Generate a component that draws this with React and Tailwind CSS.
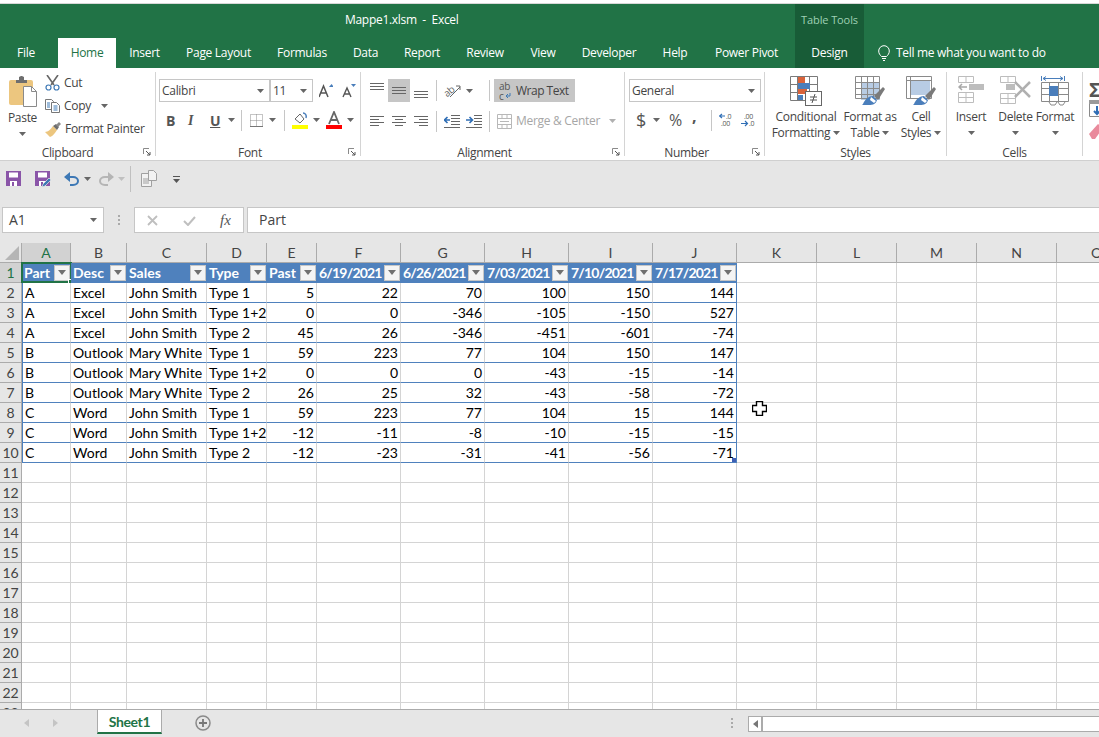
import { Fragment } from "react";

const TABS = [
  ["File", "w-[52px] mr-[6px]"],
  ["Home", "w-[58px]"],
  ["Insert", "w-[57px]"],
  ["Page Layout", "w-[91px]"],
  ["Formulas", "w-[76px]"],
  ["Data", "w-[51px]"],
  ["Report", "w-[62px]"],
  ["Review", "w-[64px]"],
  ["View", "w-[52px]"],
  ["Developer", "w-[80px]"],
  ["Help", "w-[52px]"],
  ["Power Pivot", "w-[91px]"],
];

const COLUMNS = ["A", "B", "C", "D", "E", "F", "G", "H", "I", "J", "K", "L", "M", "N", "O"];
const HEADERS = ["Part", "Desc", "Sales", "Type", "Past", "6/19/2021", "6/26/2021", "7/03/2021", "7/10/2021", "7/17/2021"];

const ROWS = [
  ["A", "Excel", "John Smith", "Type 1", 5, 22, 70, 100, 150, 144],
  ["A", "Excel", "John Smith", "Type 1+2", 0, 0, -346, -105, -150, 527],
  ["A", "Excel", "John Smith", "Type 2", 45, 26, -346, -451, -601, -74],
  ["B", "Outlook", "Mary White", "Type 1", 59, 223, 77, 104, 150, 147],
  ["B", "Outlook", "Mary White", "Type 1+2", 0, 0, 0, -43, -15, -14],
  ["B", "Outlook", "Mary White", "Type 2", 26, 25, 32, -43, -58, -72],
  ["C", "Word", "John Smith", "Type 1", 59, 223, 77, 104, 15, 144],
  ["C", "Word", "John Smith", "Type 1+2", -12, -11, -8, -10, -15, -15],
  ["C", "Word", "John Smith", "Type 2", -12, -23, -31, -41, -56, -71],
];

function Svg({ w, h, className = "", children }) {
  return (
    <svg width={w} height={h} viewBox={`0 0 ${w} ${h}`} fill="none" className={`block shrink-0 ${className}`}>
      {children}
    </svg>
  );
}

function Caret({ className = "", color = "#666" }) {
  return (
    <Svg w={7} h={4} className={className}>
      <path d="M0 0h7L3.5 4z" fill={color} />
    </Svg>
  );
}

function Sep({ className = "" }) {
  return <div className={`h-[21px] w-px shrink-0 bg-[#c6c6c6] ${className}`} />;
}

function Launcher() {
  return (
    <Svg w={8} h={8} className="absolute right-[4px] top-[4px]">
      <path d="M.5 6V.5H6" stroke="#8a8a8a" />
      <path d="M3 3l4 4M7 4v3H4" stroke="#555" />
    </Svg>
  );
}

function Group({ w, label, launcher, pad = "", children }) {
  return (
    <div className={`flex shrink-0 ${w}`}>
      <div className="flex min-w-0 flex-1 flex-col">
        <div className="h-[76px]">{children}</div>
        <div className="relative h-[16px] text-center leading-[16px]">
          <div className={`pt-[1px] ${pad}`}>{label}</div>
          {launcher && <Launcher />}
        </div>
      </div>
      <div className="my-[4px] w-px bg-[#d4d4d4]" />
    </div>
  );
}

function Combo({ w, children }) {
  return (
    <div className={`flex h-[23px] items-center justify-between border border-[#c6c6c6] bg-white pl-[2px] pr-[5px] ${w}`}>
      <span className="leading-none">{children}</span>
      <Caret />
    </div>
  );
}

function AlignLines({ lines, className = "" }) {
  return (
    <Svg w={14} h={14} className={className}>
      {lines.map(([a, b, y]) => (
        <path key={y} d={`M${a} ${y + 0.5}H${b}`} stroke="#666" />
      ))}
    </Svg>
  );
}

function BigButton({ w, icon, line1, line2 }) {
  return (
    <div className={`flex shrink-0 flex-col items-center ${w}`}>
      <div className="flex h-[36px] items-start pt-[8px]">{icon}</div>
      <div className="mt-[5px] whitespace-nowrap leading-[16px]">{line1}</div>
      {line2 ? (
        <div className="flex items-center gap-[3px] whitespace-nowrap leading-[16px]">
          {line2}
          <Caret />
        </div>
      ) : (
        <div className="flex h-[16px] items-center">
          <Caret />
        </div>
      )}
    </div>
  );
}

function Brush({ x = 0, y = 0 }) {
  return (
    <g transform={`translate(${x} ${y})`}>
      <path d="M14 10L23 1l2 2-7 11z" fill="#7a7a7a" />
      <path d="M3 18c2-5 6-8 10-8l4 4c-1 4-4 5-8 5H2z" fill="#4a7ebb" />
      <path d="M11 11l5 4-2 2-4-3z" fill="#fff" />
    </g>
  );
}

function CondIcon() {
  return (
    <Svg w={32} h={30}>
      <path d="M.5.5h27v24H.5zM.5 8.5h27M.5 16.5h27M7.5.5v24M19.5.5v24" stroke="#7a7a7a" />
      <rect x="8" y="1" width="7" height="6" fill="#d9633b" />
      <rect x="8" y="7" width="12" height="6" fill="#4a7ebb" />
      <rect x="8" y="13" width="9" height="5" fill="#d9633b" />
      <rect x="8" y="19" width="5" height="5" fill="#4a7ebb" />
      <rect x="15.5" y="15.5" width="16" height="14" fill="#fff" stroke="#666" />
      <path d="M20 21h7M20 24h7M25 18l-3 9" stroke="#555" />
    </Svg>
  );
}

function TableIcon() {
  return (
    <Svg w={30} h={30}>
      <rect x="6" y="6" width="19" height="18" fill="#b8cce4" />
      <path d="M.5.5h24v22H.5zM.5 6.5h24M.5 12.5h24M.5 18.5h24M6.5.5v22M12.5.5v22M18.5.5v22" stroke="#8a8a8a" />
      <Brush x={5} y={10} />
    </Svg>
  );
}

function CellStyleIcon() {
  return (
    <Svg w={30} h={30}>
      <rect x="5" y="5" width="19" height="14" fill="#b8cce4" />
      <path d="M.5.5h25v22H.5zM.5 4.5h25M4.5.5v22" stroke="#8a8a8a" />
      <Brush x={5} y={10} />
    </Svg>
  );
}

function InsertIcon() {
  return (
    <Svg w={26} h={27}>
      <path d="M.5.5h15v6H.5zM8 .5v6M.5 16.5h15v10H.5zM.5 21.5h15M8 16.5v10" stroke="#bdbdbd" />
      <rect x="11" y="8" width="15" height="6" fill="#bdbdbd" />
      <path d="M1 11h8M4 8l-3 3 3 3" stroke="#a8a8a8" strokeWidth="1.5" />
    </Svg>
  );
}

function DeleteIcon() {
  return (
    <Svg w={31} h={28}>
      <path d="M.5.5h15v6H.5zM8 .5v6M.5 17.5h15v10H.5zM.5 22.5h15M8 17.5v10" stroke="#bdbdbd" />
      <rect x="6" y="8" width="9" height="6" fill="#bdbdbd" />
      <path d="M15 6l15 15M30 6L15 21" stroke="#b0b0b0" strokeWidth="2.5" />
    </Svg>
  );
}

function FormatIcon() {
  return (
    <Svg w={29} h={30}>
      <path d="M.5 0v5M23.5 0v5M2 2.5h20" stroke="#4a7ebb" />
      <path d="M5 .5L2 2.500l3 2M19 .5l3 2-3 2" stroke="#4a7ebb" />
      <path d="M.5 6.500h27v19H.5zM.5 12.500h27M.5 18.500h27M8.500 6.500v19M17.500 6.500v19" stroke="#8a8a8a" />
      <rect x="8" y="10" width="9" height="10" fill="#4a7ebb" />
      <path d="M8 26l2 3h4l2-3M17 26l2 3h3l2-3" stroke="#8a8a8a" />
    </Svg>
  );
}

function SaveIcon() {
  return (
    <Svg w={15} h={15}>
      <path d="M0 0h15v15H0z" fill="#8a55a8" />
      <rect x="3" y="1.5" width="9" height="5" fill="#fff" />
      <rect x="4" y="10" width="7" height="5" fill="#fff" />
      <rect x="6" y="11" width="2" height="4" fill="#8a55a8" />
    </Svg>
  );
}

function ClipboardGroup() {
  return (
    <Group w="w-[156px]" label="Clipboard" launcher pad="pr-[20px]">
      <div className="flex">
        <div className="flex w-[45px] flex-col items-center">
          <Svg w={30} h={33} className="mt-[7px]">
            <rect x="1" y="5" width="24" height="25" rx="2" fill="#ecc67f" />
            <path d="M8 5h3V2l2-1h1l2 1v3h3v3H8z" fill="#6e6e6e" />
            <path d="M15.5 11.5h8l5 5v15h-13z" fill="#fff" stroke="#8a8a8a" />
            <path d="M23.5 11.5v5h5" stroke="#8a8a8a" />
          </Svg>
          <div className="mt-[2px] leading-[16px]">Paste</div>
          <Caret className="mt-[6px]" />
        </div>
        <div className="flex flex-col">
          <div className="mt-[5px] flex h-[20px] items-center gap-[4px]">
            <Svg w={15} h={16}>
              <path d="M2 0l7 10M13 0L6 10" stroke="#666" strokeWidth="1.6" />
              <circle cx="3.5" cy="12.5" r="2.5" stroke="#3d78b5" strokeWidth="1.2" />
              <circle cx="11.5" cy="12.5" r="2.5" stroke="#3d78b5" strokeWidth="1.2" />
            </Svg>
            <span>Cut</span>
          </div>
          <div className="mt-[3px] flex h-[20px] items-center gap-[4px]">
            <Svg w={15} h={14}>
              <path d="M.5.5h6l2 2v8h-8z" fill="#fff" stroke="#777" />
              <path d="M6.500 3.500h5l3 3v7h-8z" fill="#fff" stroke="#777" />
              <path d="M2 4h3M2 6h3M2 8h3M8.500 7h4M8.500 9h4M8.500 11h4" stroke="#3d78b5" />
            </Svg>
            <span>Copy</span>
            <Caret className="ml-[6px]" />
          </div>
          <div className="mt-[3px] flex h-[20px] items-center gap-[4px]">
            <Svg w={16} h={15}>
              <path d="M0 10c3 0 6-3 8-6l4 4c-2 3-4 6-7 7z" fill="#ecc67f" />
              <path d="M8 4l3-2 3 3-2 3z" fill="#6e6e6e" />
              <path d="M11 3l3-3 2 2-3 3z" fill="#8a8a8a" />
            </Svg>
            <span>Format Painter</span>
          </div>
        </div>
      </div>
    </Group>
  );
}

function FontGroup() {
  return (
    <Group w="w-[205px]" label="Font" launcher pad="pr-[16px]">
      <div className="flex items-center pl-[3px] pt-[11px]">
        <Combo w="w-[111px]">Calibri</Combo>
        <Combo w="w-[43px]">11</Combo>
        <Svg w={14} h={14} className="ml-[6px]">
          <path d="M0 13L4.500 2 9 13M2 9h5" stroke="#555" strokeWidth="1.5" />
          <path d="M10 3l2.500-3L15 3z" fill="#4a7ebb" />
        </Svg>
        <Svg w={14} h={14} className="ml-[9px]">
          <path d="M1 13L5 4l4 9M2.500 10h5" stroke="#555" strokeWidth="1.4" />
          <path d="M9 0h5l-2.500 3z" fill="#4a7ebb" />
        </Svg>
      </div>
      <div className="mt-[8px] flex h-[20px] items-center pl-[10px] font-bold text-[#555]">
        <span className="w-[22px] text-[14px]">B</span>
        <span className="w-[22px] font-['Liberation_Serif',serif] text-[14px] italic">I</span>
        <span className="w-[14px] text-[14px] underline">U</span>
        <Caret className="ml-[4px]" />
        <Sep className="ml-[6px]" />
        <Svg w={13} h={13} className="ml-[8px]">
          <path d="M.5.500h12v12H.5zM6.500.500v12M.5 6.500h12" stroke="#8a8a8a" strokeDasharray="1 1" />
          <path d="M0 12.500h13" stroke="#777" />
        </Svg>
        <Caret className="ml-[6px]" />
        <Sep className="ml-[8px]" />
        <Svg w={16} h={18} className="ml-[7px]">
          <path d="M3 8l5-5 4 5-4 4z" fill="#fff" stroke="#666" />
          <path d="M11 2c2 0 4 2 3 5" stroke="#4a7ebb" strokeWidth="1.5" />
          <rect y="14" width="16" height="4" fill="#ffff00" />
        </Svg>
        <Caret className="ml-[5px]" />
        <Svg w={16} h={18} className="ml-[6px]">
          <path d="M3 13L8 1l5 12M5 9h6" stroke="#666" strokeWidth="1.8" />
          <rect y="14" width="16" height="4" fill="#ff0000" />
        </Svg>
        <Caret className="ml-[5px]" />
      </div>
    </Group>
  );
}

function AlignmentGroup() {
  return (
    <Group w="w-[264px]" label="Alignment" launcher pad="pr-[16px]">
      <div className="flex h-[34px] items-center pl-[9px] pt-[11px]">
        <AlignLines className="-mt-[2px]" lines={[[0, 14, 0], [0, 14, 3], [0, 14, 6]]} />
        <div className="ml-[4px] flex h-[23px] w-[22px] items-center justify-center bg-[#c6c6c6]">
          <AlignLines lines={[[0, 14, 3], [0, 14, 6], [0, 14, 9]]} />
        </div>
        <AlignLines className="ml-[4px]" lines={[[0, 14, 7], [0, 14, 10], [0, 14, 13]]} />
        <Sep className="ml-[8px]" />
        <div className="ml-[7px] w-[17px]">
          <Svg w={17} h={16}>
            <text x="0" y="12" fontSize="10" fontFamily="Open Sans" fill="#666" transform="rotate(-40 5 9)">ab</text>
            <path d="M6 14L16 4M12 3h4v4" stroke="#666" />
          </Svg>
        </div>
        <Caret className="ml-[5px]" />
        <Sep className="ml-[16px]" />
        <div className="ml-[4px] flex h-[23px] w-[81px] items-center gap-[4px] bg-[#c6c6c6] pl-[5px]">
          <div className="flex w-[13px] flex-col text-[10px] leading-[10px] text-[#555]">
            <span>ab</span>
            <span className="flex items-center">
              c
              <Svg w={6} h={5} className="ml-[1px]">
                <path d="M5 0v3H1M3 1L1 3l2 2" stroke="#3d78b5" />
              </Svg>
            </span>
          </div>
          <span className="tracking-[-0.5px]">Wrap Text</span>
        </div>
      </div>
      <div className="mt-[9px] flex h-[20px] items-center pl-[9px]">
        <AlignLines lines={[[0, 14, 2], [0, 9, 5], [0, 14, 8], [0, 9, 11]]} />
        <AlignLines className="ml-[8px]" lines={[[0, 14, 2], [3, 11, 5], [0, 14, 8], [3, 11, 11]]} />
        <AlignLines className="ml-[8px]" lines={[[0, 14, 2], [5, 14, 5], [0, 14, 8], [5, 14, 11]]} />
        <Sep className="ml-[8px]" />
        <Svg w={16} h={14} className="ml-[7px]">
          <path d="M7 1.500h9M7 4.500h9M7 7.500h9M7 10.500h9M0 13.500h16" stroke="#666" />
          <path d="M6 6H1M3.500 3L.5 6l3 3" stroke="#2f6eb5" strokeWidth="1.6" />
        </Svg>
        <Svg w={16} h={14} className="ml-[6px]">
          <path d="M8 1.500h8M8 4.500h8M8 7.500h8M8 10.500h8M0 13.500h16" stroke="#666" />
          <path d="M0 6h6M3.500 3l3 3-3 3" stroke="#2f6eb5" strokeWidth="1.6" />
        </Svg>
        <Sep className="ml-[7px]" />
        <div className="ml-[7px] flex items-center gap-[4px] text-[#a6a6a6]">
          <Svg w={15} h={15}>
            <path d="M.5.5h14v14H.5zM.5 4.500h14M.5 10.500h14M5 .5v4M10 .5v4M5 10.500v4M10 10.500v4M3 7.500h9" stroke="#b8b8b8" />
          </Svg>
          <span>Merge &amp; Center</span>
          <Caret className="ml-[5px]" color="#b0b0b0" />
        </div>
      </div>
    </Group>
  );
}

function NumberGroup() {
  return (
    <Group w="w-[140px]" label="Number" launcher pad="pr-[16px]">
      <div className="pl-[4px] pt-[11px]">
        <Combo w="w-[132px]">General</Combo>
      </div>
      <div className="mt-[8px] flex h-[20px] items-center pl-[11px] text-[#555]">
        <span className="w-[10px] text-[18px] leading-none">$</span>
        <Caret className="ml-[7px]" />
        <span className="ml-[9px] w-[14px] text-[16px] leading-none">%</span>
        <span className="ml-[9px] w-[9px] pb-[8px] text-[16px] font-bold leading-none">,</span>
        <Sep className="ml-[10px]" />
        <Svg w={16} h={14} className="ml-[7px]">
          <path d="M6 3H1M3 1L.5 3 3 5" stroke="#2f6eb5" strokeWidth="1.2" />
          <text x="7" y="6" fontSize="7" fill="#555" fontFamily="Open Sans">.0</text>
          <text x="2" y="13" fontSize="7" fill="#555" fontFamily="Open Sans">.00</text>
        </Svg>
        <Svg w={16} h={14} className="ml-[6px]">
          <text x="3" y="6" fontSize="7" fill="#555" fontFamily="Open Sans">.00</text>
          <path d="M0 10.500h6M4 8l2.500 2.500L4 13" stroke="#2f6eb5" strokeWidth="1.2" />
          <text x="8" y="13" fontSize="7" fill="#555" fontFamily="Open Sans">.0</text>
        </Svg>
      </div>
    </Group>
  );
}

function Ribbon() {
  return (
    <div className="flex h-[93px] shrink-0 overflow-hidden border-b border-[#d0d0d0] bg-white text-[12px] tracking-[-0.3px] text-[#444]">
      <ClipboardGroup />
      <FontGroup />
      <AlignmentGroup />
      <NumberGroup />
      <Group w="w-[182px]" label="Styles">
        <div className="flex pl-[8px]">
          <BigButton w="w-[66px]" icon={<CondIcon />} line1="Conditional" line2="Formatting" />
          <BigButton w="w-[62px]" icon={<TableIcon />} line1="Format as" line2="Table" />
          <BigButton w="w-[40px]" icon={<CellStyleIcon />} line1="Cell" line2="Styles" />
        </div>
      </Group>
      <Group w="w-[136px]" label="Cells">
        <div className="flex pl-[8px]">
          <BigButton w="w-[32px]" icon={<InsertIcon />} line1="Insert" />
          <BigButton w="w-[49px] pl-[8px]" icon={<DeleteIcon />} line1="Delete" />
          <BigButton w="w-[38px]" icon={<FormatIcon />} line1="Format" />
        </div>
      </Group>
      <div className="flex flex-col pl-[6px] pt-[15px]">
        <span className="h-[14px] text-[20px] font-bold leading-[14px] text-[#555]">Σ</span>
        <Svg w={16} h={17} className="mt-[3px]">
          <path d="M.5.5h15v16H.5z" stroke="#8a8a8a" fill="#fff" />
          <path d="M0 0h16v4H0z" fill="#9a9a9a" />
          <path d="M8 6v8M5 11l3 3 3-3" stroke="#2f6eb5" strokeWidth="2" />
        </Svg>
        <Svg w={14} h={15} className="mt-[7px]">
          <path d="M0 10L9 0l5 4-8 11H3z" fill="#e98a9c" />
        </Svg>
      </div>
    </div>
  );
}

function Toolbar() {
  return (
    <div className="flex h-[46px] shrink-0 items-center bg-[#e6e6e6] pb-[11px] pl-[6px]">
      <SaveIcon />
      <div className="relative ml-[14px]">
        <SaveIcon />
        <Svg w={11} h={11} className="absolute -bottom-[2px] -right-[2px]">
          <path d="M1 10l1-3 6-6 2 2-6 6z" fill="#3d78b5" stroke="#e6e6e6" strokeWidth=".7" />
        </Svg>
      </div>
      <Svg w={15} h={14} className="ml-[14px]">
        <path d="M3 5h6c3 0 5 2 5 4s-2 4-5 4H6" stroke="#3d78b5" strokeWidth="2" />
        <path d="M6 0v10L0 5z" fill="#3d78b5" />
      </Svg>
      <Caret className="ml-[5px]" />
      <Svg w={15} h={14} className="ml-[8px]">
        <path d="M12 5H6c-3 0-5 2-5 4s2 4 5 4h3" stroke="#b5b5b5" strokeWidth="2" />
        <path d="M9 0v10l6-5z" fill="#b5b5b5" />
      </Svg>
      <Caret className="ml-[4px]" color="#c0c0c0" />
      <div className="ml-[5px] h-[26px] w-px bg-[#c0c0c0]" />
      <Svg w={17} h={17} className="ml-[10px]">
        <path d="M.5 3.500h7l3 3v10H.5z" fill="#f2f2f2" stroke="#a0a0a0" />
        <path d="M7.500.5h5l3 3v7h-8z" fill="#f2f2f2" stroke="#a0a0a0" />
        <path d="M2 9h6M2 11h6M2 13h6" stroke="#a0a0a0" />
      </Svg>
      <Svg w={7} h={8} className="ml-[15px]">
        <path d="M0 1.500h7" stroke="#555" />
        <path d="M0 4h7L3.500 8z" fill="#555" />
      </Svg>
    </div>
  );
}

function FormulaBar() {
  return (
    <div className="flex h-[36px] shrink-0 bg-[#e6e6e6] pb-[10px] pl-[2px] text-[14px] leading-[20px] text-[#444]">
      <div className="flex w-[102px] items-center justify-between border border-[#c6c6c6] bg-white px-[6px] pb-[1px]">
        <span>A1</span>
        <Caret />
      </div>
      <div className="flex w-[30px] items-center justify-center">
        <Svg w={2} h={10}>
          <path d="M0 0h2v2H0zM0 4h2v2H0zM0 8h2v2H0z" fill="#aaa" />
        </Svg>
      </div>
      <div className="flex w-[110px] items-center border border-[#c6c6c6] bg-white pl-[12px]">
        <Svg w={11} h={11}>
          <path d="M1 1l9 9M10 1l-9 9" stroke="#bfbfbf" strokeWidth="1.8" />
        </Svg>
        <Svg w={13} h={11} className="ml-[25px]">
          <path d="M1 6l4 4 7-8" stroke="#bfbfbf" strokeWidth="2" />
        </Svg>
        <span className="ml-[24px] font-['Liberation_Serif',serif] text-[15px] italic text-[#555]">fx</span>
      </div>
      <div className="ml-[3px] flex flex-1 items-center border-y border-l border-[#c6c6c6] bg-white pb-[1px] pl-[11px]">
        Part
      </div>
    </div>
  );
}

function FilterButton() {
  return (
    <div className="flex h-[16px] w-[16px] shrink-0 items-center justify-center border border-[#c6c6c6] bg-[#f4f4f4]">
      <Svg w={8} h={5}>
        <path d="M0 0h8L4 5z" fill="#707070" />
      </Svg>
    </div>
  );
}

function Sheet() {
  const headCell = "flex items-center justify-center border-b border-r border-[#ababab] text-[14px] text-[#444]";

  return (
    <div className="h-[466px] shrink-0 overflow-hidden bg-white font-['Lato',sans-serif] text-[14px] text-black">
      <div className="grid auto-rows-[20px] grid-cols-[22px_49px_56px_80px_60px_50px_84px_84px_84px_84px_84px_80px_80px_80px_80px_80px]">
        <div className="flex items-end justify-end border-b border-r border-[#ababab] bg-[#e6e6e6] p-[2px]">
          <Svg w={14} h={14}>
            <path d="M14 0v14H0z" fill="#b5b5b5" />
          </Svg>
        </div>
        {COLUMNS.map((col) => (
          <div key={col} className={`${headCell} ${col === "A" ? "bg-[#d2d2d2] text-[#217346]" : "bg-[#e6e6e6]"}`}>
            {col}
          </div>
        ))}

        {Array.from({ length: 24 }, (_, r) => {
          const row = r + 1;
          return (
            <Fragment key={row}>
              <div className={`${headCell} ${row === 1 ? "bg-[#d2d2d2] text-[#217346]" : "bg-[#e6e6e6]"}`}>{row}</div>
              {COLUMNS.map((col, c) => {
                if (row === 1 && c < 10) {
                  return (
                    <div key={col} className="relative flex items-center justify-between gap-[1px] border-b border-[#4f81bd] bg-[#4f81bd] pl-[2px] pr-[1px] font-bold text-white">
                      <span className={`whitespace-nowrap ${c >= 5 ? "tracking-[-0.8px]" : ""}`}>{HEADERS[c]}</span>
                      <FilterButton />
                      {c === 0 && (
                        <div className="absolute -inset-x-px -bottom-px -top-px border-2 border-[#217346]">
                          <div className="absolute -bottom-[3px] -right-[3px] h-[5px] w-[5px] border border-white bg-[#217346]" />
                        </div>
                      )}
                    </div>
                  );
                }
                if (row >= 2 && row <= 10 && c < 10) {
                  const value = ROWS[row - 2][c];
                  return (
                    <div
                      key={col}
                      className={`relative flex items-center overflow-hidden whitespace-nowrap border-b border-[#4f81bd] px-[2px] ${typeof value === "number" ? "justify-end" : ""} ${c === 0 ? "border-l" : ""} ${c === 9 ? "border-r" : "border-r border-r-[#d4d4d4]"}`}
                    >
                      {value}
                      {row === 10 && c === 9 && <div className="absolute bottom-0 right-0 h-[4px] w-[4px] bg-[#3d5fb5]" />}
                    </div>
                  );
                }
                return (
                  <div key={col} className="relative border-b border-r border-[#d4d4d4]">
                    {row === 8 && col === "K" && (
                      <Svg w={15} h={15} className="absolute left-[15px] top-[-2px]">
                        <path d="M4.500.5h6v4h4v6h-4v4h-6v-4h-4v-6h4z" fill="#fff" stroke="#000" strokeWidth="1.4" />
                      </Svg>
                    )}
                  </div>
                );
              })}
            </Fragment>
          );
        })}
      </div>
    </div>
  );
}

function Footer() {
  return (
    <div className="flex h-[28px] shrink-0 border-t border-[#ababab] bg-[#e6e6e6]">
      <div className="flex w-[97px] items-center pb-[2px] pl-[24px]">
        <Svg w={5} h={8}>
          <path d="M5 0v8L0 4z" fill="#c4c4c4" />
        </Svg>
        <Svg w={5} h={8} className="ml-[24px]">
          <path d="M0 0v8l5-4z" fill="#c4c4c4" />
        </Svg>
      </div>
      <div className="flex h-[24px] w-[65px] items-center justify-center border-x border-b-2 border-x-[#ababab] border-b-[#217346] bg-white font-['Lato',sans-serif] text-[14px] font-bold tracking-[-0.4px] text-[#217346]">
        Sheet1
      </div>
      <div className="flex w-[84px] items-center pb-[2px] pl-[33px]">
        <Svg w={16} h={16}>
          <circle cx="8" cy="8" r="7" stroke="#8a8a8a" strokeWidth="1.5" />
          <path d="M8 4v8M4 8h8" stroke="#777" strokeWidth="1.8" />
        </Svg>
      </div>
      <div className="flex w-[502px] items-center justify-end pb-[2px] pr-[15px]">
        <Svg w={2} h={10}>
          <path d="M0 0h2v2H0zM0 4h2v2H0zM0 8h2v2H0z" fill="#aaa" />
        </Svg>
      </div>
      <div className="mt-[6px] flex h-[16px] flex-1 border-y border-l border-[#ababab] bg-white">
        <div className="flex w-[14px] items-center justify-center border-r-2 border-[#ababab]">
          <Svg w={5} h={8}>
            <path d="M5 0v8L0 4z" fill="#777" />
          </Svg>
        </div>
      </div>
    </div>
  );
}

export default function App() {
  return (
    <div className="flex h-[737px] w-[1099px] flex-col overflow-hidden bg-white font-['Open_Sans',sans-serif]">
      <div className="h-[4px] shrink-0 border-b border-[#d8d8d8] bg-white" />

      <div className="flex h-[64px] shrink-0 bg-[#217346] text-[12px] tracking-[-0.3px] text-white">
        <div className="flex w-[795px] shrink-0 flex-col">
          <div className="h-[34px] whitespace-pre pl-[345px] pt-[7px] leading-[18px]">Mappe1.xlsm  -  Excel</div>
          <div className="flex h-[30px]">
            {TABS.map(([name, w]) => (
              <div
                key={name}
                className={`flex items-center justify-center ${w} ${name === "Home" ? "bg-white text-[#217346]" : ""}`}
              >
                {name}
              </div>
            ))}
          </div>
        </div>
        <div className="flex w-[69px] shrink-0 flex-col bg-[#185c37]">
          <div className="h-[34px] pt-[7px] text-center text-[11px] leading-[18px] tracking-[-0.1px] text-[#9fd0b4]">Table Tools</div>
          <div className="flex h-[30px] items-center justify-center">Design</div>
        </div>
        <div className="flex flex-1 items-end">
          <div className="flex h-[30px] items-center gap-[6px] pl-[14px]">
            <Svg w={12} h={16}>
              <path d="M3.500 11.500C2 10 .7 8.500.7 6A5.300 5.300 0 0 1 11.300 6c0 2.500-1.300 4-2.800 5.500zM4 13.500h4M5 15.500h2" stroke="#fff" />
            </Svg>
            Tell me what you want to do
          </div>
        </div>
      </div>

      <Ribbon />
      <Toolbar />
      <FormulaBar />
      <Sheet />
      <Footer />
    </div>
  );
}
